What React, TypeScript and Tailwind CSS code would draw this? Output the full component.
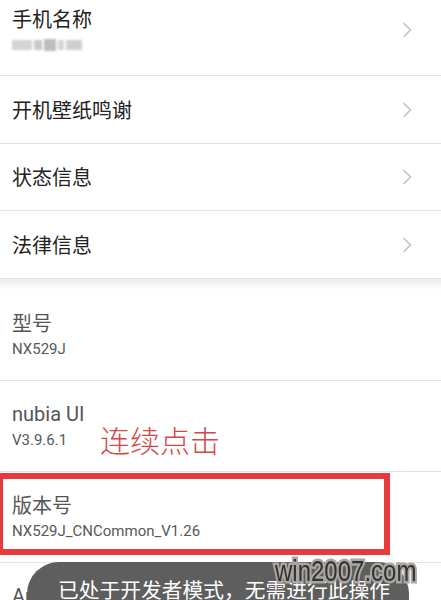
import React from "react";

const CJK = "font-['Noto_Sans_CJK_SC','Noto_Sans',sans-serif]";
const LAT = "font-['Roboto','Noto_Sans_CJK_SC',sans-serif]";

function Chevron() {
  return (
    <svg width="10" height="16" viewBox="0 0 10 16" className="shrink-0">
      <polyline points="1.5,1 8.5,8 1.5,15" fill="none" stroke="#c2c2c2" strokeWidth="1.6" strokeLinejoin="miter" />
    </svg>
  );
}

function NavRow({ title, h, children }: { title: string; h: string; children?: React.ReactNode }) {
  return (
    <div className={`${h} flex items-center justify-between border-b border-[#e3e3e3] pl-3 pr-[29px]`}>
      <div className="flex flex-col">
        <div className={`${CJK} text-[20px] leading-[26px] text-[#222]`}>{title}</div>
        {children}
      </div>
      <Chevron />
    </div>
  );
}

function InfoRow({ title, sub, latinTitle }: { title: string; sub: string; latinTitle?: boolean }) {
  return (
    <div className="h-[91px] flex flex-col justify-center border-b border-[#e3e3e3] pl-3 pb-px">
      <div className={`${latinTitle ? LAT : CJK} text-[20px] leading-[26px] text-[#555]`}>{title}</div>
      <div className={`${LAT} mt-[3px] text-[15px] leading-[20px] text-[#585858]`}>{sub}</div>
    </div>
  );
}

export default function App() {
  return (
    <div className="relative h-[600px] w-[441px] overflow-hidden bg-white">
      <div className="-mt-[15px] flex flex-col">
        <NavRow title="手机名称" h="h-[91px]">
          <div className="mt-[3px] flex h-[20px] items-center gap-[2px] blur-[1.2px]">
            <div className="h-[10px] w-[20px] bg-[#d4d4d4]" />
            <div className="h-[10px] w-[8px] bg-[#c8c8c8]" />
            <div className="h-[12px] w-[12px] bg-[#bdbdbd]" />
            <div className="h-[10px] w-[6px] bg-[#d6d6d6]" />
            <div className="h-[10px] w-[16px] bg-[#cfcfcf]" />
          </div>
        </NavRow>
        <NavRow title="开机壁纸鸣谢" h="h-[68px]" />
        <NavRow title="状态信息" h="h-[67px]" />
        <NavRow title="法律信息" h="h-[68px]" />
        <div className="h-[11px] bg-linear-to-b from-[#ececec] to-white" />
        <InfoRow title="型号" sub="NX529J" />
        <div className="relative">
          <InfoRow title="nubia UI" sub="V3.9.6.1" latinTitle />
          <div className={`${CJK} absolute left-[100px] top-[43px] text-[30px] font-light leading-none text-[#d64848]`}>连续点击</div>
        </div>
        <div className="relative">
          <InfoRow title="版本号" sub="NX529J_CNCommon_V1.26" />
          <div className="absolute -left-[3px] top-[1px] h-[82px] w-[393px] border-[6px] border-[#e8393d]" />
        </div>
        <InfoRow title="Android 版本" sub="6.0.1" latinTitle />
      </div>

      <div className="absolute left-[27px] top-[562px] h-[70px] w-[382px] rounded-[32px] bg-[#5e5e5e] pl-[31px] pt-[17px]">
        <div className={`${CJK} whitespace-nowrap text-[20.75px] leading-none text-white`}>已处于开发者模式，无需进行此操作</div>
      </div>

      <div className="absolute left-[275px] top-[556px] origin-left scale-x-[0.8] whitespace-nowrap font-['Liberation_Sans',sans-serif] text-[30px] leading-none text-[#333] [-webkit-text-stroke:5px_#aaa6a2] [paint-order:stroke_fill]">
        win2007.com
      </div>
    </div>
  );
}
